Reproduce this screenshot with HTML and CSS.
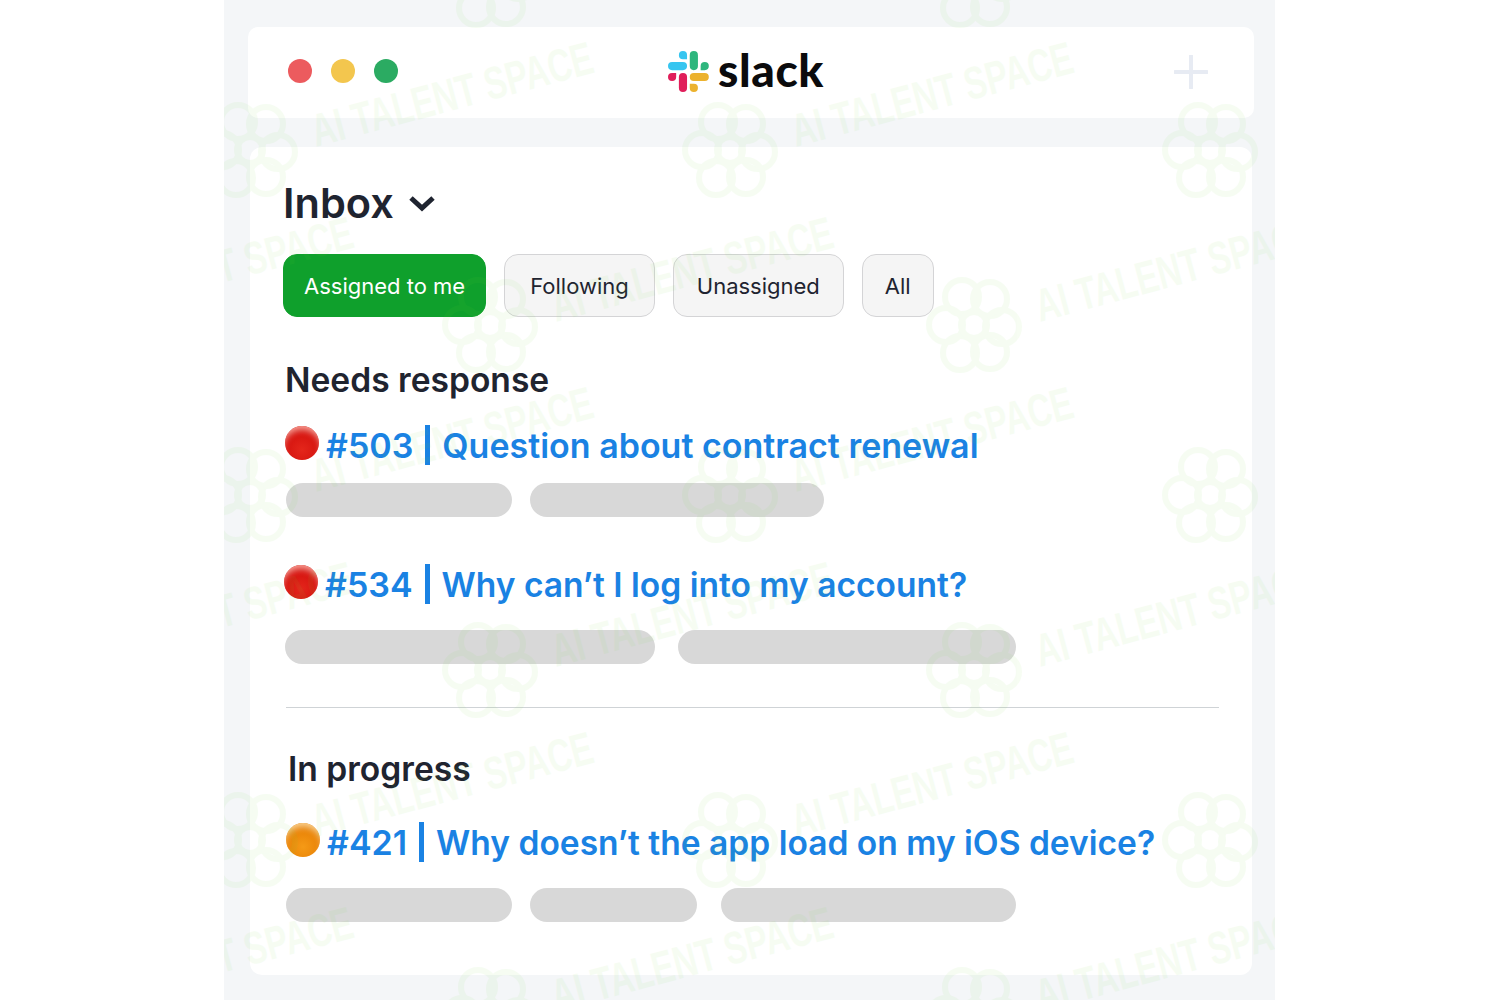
FILE: index.html
```html
<!DOCTYPE html>
<html>
<head>
	<title>Slack inbox</title>
	<link rel="stylesheet" href="styles.css">
</head>
<body>
<div class="frame">

	<div class="topbar">
		<div class="dots">
			<span class="dot dotRed"></span>
			<span class="dot dotYellow"></span>
			<span class="dot dotGreen"></span>
		</div>
		<div class="logo">
			<svg class="logoMark" viewBox="0 0 54 54" width="41" height="41">
				<path d="M19.712.133a5.381 5.381 0 0 0-5.376 5.387 5.381 5.381 0 0 0 5.376 5.386h5.376V5.52A5.381 5.381 0 0 0 19.712.133m0 14.365H5.376A5.381 5.381 0 0 0 0 19.884a5.381 5.381 0 0 0 5.376 5.387h14.336a5.381 5.381 0 0 0 5.376-5.387 5.381 5.381 0 0 0-5.376-5.386" fill="#36C5F0"/>
				<path d="M53.76 19.884a5.381 5.381 0 0 0-5.376-5.386 5.381 5.381 0 0 0-5.376 5.386v5.387h5.376a5.381 5.381 0 0 0 5.376-5.387m-14.336 0V5.52A5.381 5.381 0 0 0 34.048.133a5.381 5.381 0 0 0-5.376 5.387v14.364a5.381 5.381 0 0 0 5.376 5.387 5.381 5.381 0 0 0 5.376-5.387" fill="#2EB67D"/>
				<path d="M34.048 54a5.381 5.381 0 0 0 5.376-5.387 5.381 5.381 0 0 0-5.376-5.386h-5.376v5.386A5.381 5.381 0 0 0 34.048 54m0-14.365h14.336a5.381 5.381 0 0 0 5.376-5.386 5.381 5.381 0 0 0-5.376-5.387H34.048a5.381 5.381 0 0 0-5.376 5.387 5.381 5.381 0 0 0 5.376 5.386" fill="#ECB22E"/>
				<path d="M0 34.249a5.381 5.381 0 0 0 5.376 5.386 5.381 5.381 0 0 0 5.376-5.386v-5.387H5.376A5.381 5.381 0 0 0 0 34.25m14.336-.001v14.364A5.381 5.381 0 0 0 19.712 54a5.381 5.381 0 0 0 5.376-5.387V34.25a5.381 5.381 0 0 0-5.376-5.387 5.381 5.381 0 0 0-5.376 5.387" fill="#E01E5A"/>
			</svg>
			<span class="logoText">slack</span>
		</div>
		<svg class="plus" viewBox="0 0 34 34" width="34" height="34">
			<path d="M17 1v32M1 17h32" stroke="#e7ebf3" stroke-width="4" stroke-linecap="round" fill="none"/>
		</svg>
	</div>

	<div class="card">
		<div class="inboxTitle">
			<span>Inbox</span>
			<svg viewBox="0 0 28 18" width="28" height="18">
				<path d="M3 4l11 10L25 4" stroke="#1f2430" stroke-width="5" fill="none"/>
			</svg>
		</div>

		<div class="tabs">
			<div class="tab tabActive">Assigned to me</div>
			<div class="tab">Following</div>
			<div class="tab tabUnassigned">Unassigned</div>
			<div class="tab tabAll">All</div>
		</div>

		<h2 class="section">Needs response</h2>

		<div class="ticket first">
			<span class="ball ballRed"></span>
			<span class="num">#503</span><span class="sep"></span><span>Question about contract renewal</span>
		</div>
		<div class="bars">
			<span class="bar w226"></span>
			<span class="bar w294"></span>
		</div>

		<div class="ticket second">
			<span class="ball ballRed"></span>
			<span class="num">#534</span><span class="sep"></span><span class="titleTight">Why can’t I log into my account?</span>
		</div>
		<div class="bars barsWide">
			<span class="bar w370"></span>
			<span class="bar w338"></span>
		</div>

		<hr class="rule">

		<h2 class="section sectionProgress">In progress</h2>

		<div class="ticket third">
			<span class="ball ballOrange"></span>
			<span class="num">#421</span><span class="sep"></span><span class="titleTight">Why doesn’t the app load on my iOS device?</span>
		</div>
		<div class="bars barsLast">
			<span class="bar w226"></span>
			<span class="bar w167"></span>
			<span class="bar w295"></span>
		</div>
	</div>

	<!-- watermark over everything -->
	<svg class="watermark" viewBox="0 0 1051 1000" width="1051" height="1000">
		<defs>
			<g id="mark">
				<g class="clover">
					<circle cx="-12" cy="-28" r="17"/>
					<circle cx="16" cy="-26" r="17"/>
					<circle cx="28" cy="2" r="17"/>
					<circle cx="16" cy="27" r="17"/>
					<circle cx="-14" cy="28" r="17"/>
					<circle cx="-28" cy="0" r="17"/>
					<circle cx="0" cy="0" r="13"/>
				</g>
				<text class="markText" x="0" y="0" textLength="290" lengthAdjust="spacingAndGlyphs" transform="translate(66 -3) rotate(-15)">AI TALENT SPACE</text>
			</g>
		</defs>
		<use href="#mark" x="26" y="150"/>
		<use href="#mark" x="506" y="150"/>
		<use href="#mark" x="986" y="150"/>
		<use href="#mark" x="26" y="495"/>
		<use href="#mark" x="506" y="495"/>
		<use href="#mark" x="986" y="495"/>
		<use href="#mark" x="26" y="840"/>
		<use href="#mark" x="506" y="840"/>
		<use href="#mark" x="986" y="840"/>
		<use href="#mark" x="-214" y="325"/>
		<use href="#mark" x="266" y="325"/>
		<use href="#mark" x="750" y="325"/>
		<use href="#mark" x="-214" y="670"/>
		<use href="#mark" x="266" y="670"/>
		<use href="#mark" x="750" y="670"/>
		<use href="#mark" x="-214" y="1015"/>
		<use href="#mark" x="266" y="1015"/>
		<use href="#mark" x="750" y="1015"/>
		<use href="#mark" x="266" y="-20"/>
		<use href="#mark" x="750" y="-20"/>
	</svg>
</div>
</body>
</html>
```
FILE: styles.css
```css
body {
	margin: 0;
	background: #fff;
	font-family: Inter, "Liberation Sans", sans-serif;
	color: #1f2430;
}
.frame {
	position: relative;
	width: 1051px;
	height: 1000px;
	margin-left: 224px;
	padding: 27px 21px 0 24px;
	box-sizing: border-box;
	background: #f4f6f8;
	overflow: hidden;
}
.topbar {
	display: flex;
	align-items: center;
	justify-content: space-between;
	height: 91px;
	padding: 0 46px 2px 40px;
	box-sizing: border-box;
	background: #fff;
	border-radius: 10px;
}
.dots {
	display: flex;
	gap: 19px;
	margin-bottom: 2px;
}
.dot {
	width: 24px;
	height: 24px;
	border-radius: 50%;
}
.dotRed { background: #ec5b5e; }
.dotYellow { background: #f3c64e; }
.dotGreen { background: #2bab62; }
.logo {
	display: flex;
	align-items: center;
	gap: 9px;
	margin: 0 80px 1px 0;
}
.logoMark { display: block; }
.logoText {
	margin-bottom: 4px;
	font-family: Lato, sans-serif;
	font-weight: 900;
	font-size: 46px;
	line-height: 41px;
	letter-spacing: 0.6px;
	color: #0b0b0d;
}
.card {
	margin: 29px 2px 0 2px;
	height: 828px;
	padding: 0 33px;
	box-sizing: border-box;
	background: #fff;
	border-radius: 12px;
	overflow: hidden;
}
.inboxTitle {
	display: flex;
	align-items: center;
	gap: 14px;
	height: 48px;
	margin-top: 32px;
	font-size: 41.5px;
	font-weight: 600;
}
.tabs {
	display: flex;
	gap: 18px;
	margin-top: 27px;
}
.tab {
	display: flex;
	align-items: center;
	height: 63px;
	padding: 0 25px;
	box-sizing: border-box;
	background: #f5f5f5;
	border: 1.5px solid #d4d4d6;
	border-radius: 14px;
	font-size: 22px;
}
.tabActive {
	padding: 0 20px;
	background: #0fa02c;
	border-color: #0fa02c;
	color: #fff;
}
.tabUnassigned { padding: 0 23px; }
.tabAll { padding: 0 22px; }
.section {
	margin: 42px 0 0 2px;
	height: 42px;
	line-height: 42px;
	font-size: 33.6px;
	font-weight: 600;
}
.sectionProgress {
	margin: 40px 0 0 5px;
}
.ticket {
	display: flex;
	align-items: center;
	height: 44px;
	color: #1a82e3;
	font-size: 34px;
	font-weight: 600;
}
.titleTight { font-size: 33.55px; }
.first { margin-top: 22px; margin-left: 2px; }
.second { margin-top: 45px; margin-left: 1px; }
.third { margin-top: 30px; margin-left: 3px; }
.ball {
	width: 34px;
	height: 34px;
	margin-right: 7px;
	border-radius: 50%;
	position: relative;
	top: -2px;
}
.ballRed {
	background: radial-gradient(circle at 50% 70%, #e4261b 0, #d61510 55%, #a80c0c 100%);
	box-shadow: inset 0 6px 6px -2px #fb9c92;
}
.ballOrange {
	background: radial-gradient(circle at 50% 70%, #f59a16 0, #ea8408 55%, #c96a06 100%);
	box-shadow: inset 0 6px 6px -2px #fcd08c;
}
.sep {
	width: 5px;
	height: 40px;
	margin: 0 12px;
	background: #1a82e3;
}
.bars {
	display: flex;
	gap: 18px;
	margin: 16px 0 0 3px;
}
.barsWide {
	gap: 23px;
	margin: 24px 0 0 2px;
}
.barsLast {
	gap: 18px;
	margin: 24px 0 0 3px;
}
.bar {
	height: 34px;
	background: #d8d8d8;
	border-radius: 17px;
}
.w226 { width: 226px; }
.w294 { width: 294px; }
.w370 { width: 370px; }
.w338 { width: 338px; }
.w167 { width: 167px; margin-right: 6px; }
.w295 { width: 295px; }
.rule {
	height: 1px;
	margin: 43px 0 0 3px;
	width: 933px;
	border: 0;
	background: #cfd3d6;
}
.plus { display: block; }
.watermark {
	position: absolute;
	top: 0;
	left: 0;
	pointer-events: none;
}
.clover {
	opacity: 0.06;
}
.clover circle {
	fill: none;
	stroke: #6fdc3a;
	stroke-width: 6;
}
.markText {
	font-family: "Liberation Sans", sans-serif;
	font-weight: bold;
	font-size: 46px;
	fill: #6fdc3a;
	opacity: 0.06;
}
```
